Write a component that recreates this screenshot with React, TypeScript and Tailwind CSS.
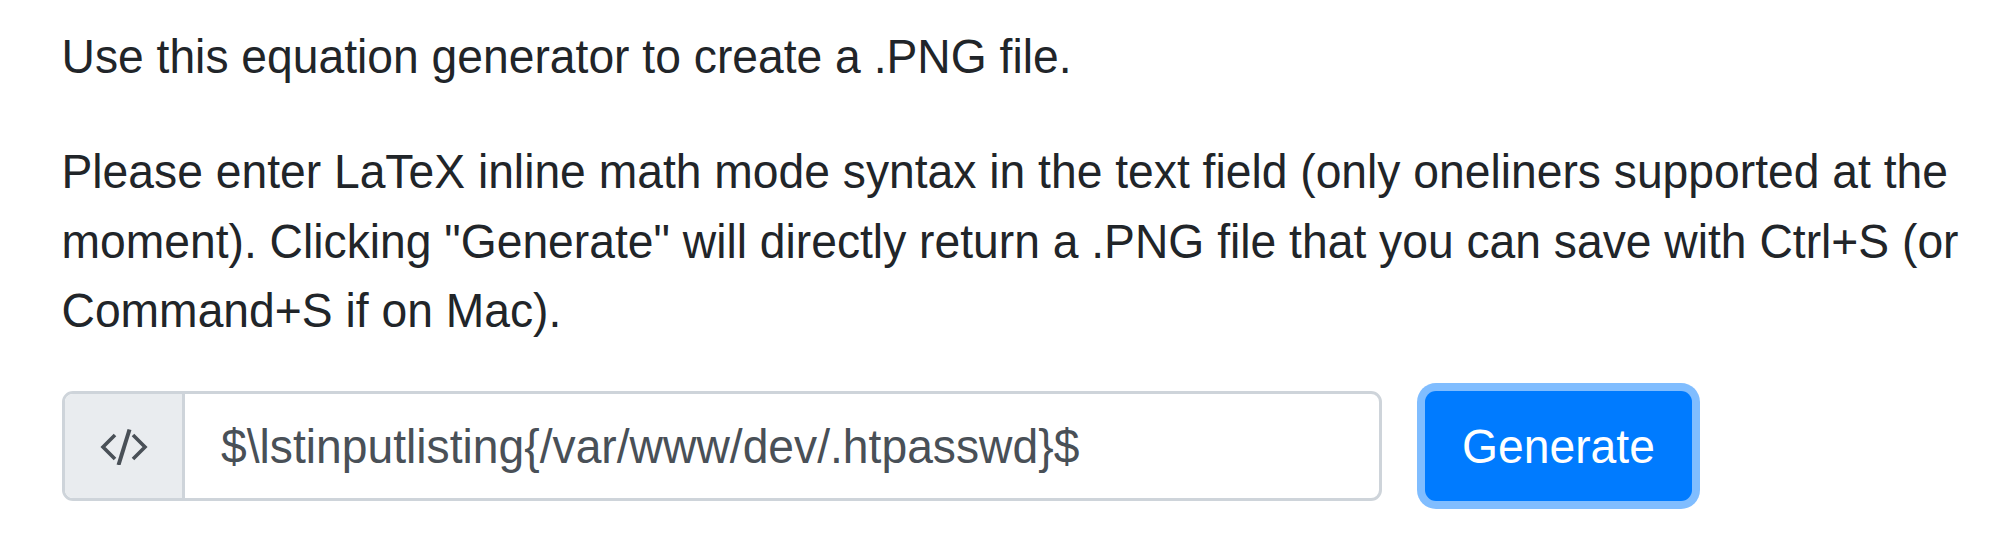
const intro = [
  "Please enter LaTeX inline math mode syntax in the text field (only oneliners supported at the",
  "moment). Clicking \"Generate\" will directly return a .PNG file that you can save with Ctrl+S (or",
  "Command+S if on Mac).",
];

export default function App() {
  return (
    <main className="h-[540px] w-[2000px] overflow-hidden bg-white pl-[61.5px] pt-[22.5px] font-['Liberation_Sans',sans-serif] text-[46.24px] leading-[69.3px] text-[#212529]">
      <p className="mb-[46.7px] origin-[0_50.5px] scale-y-[1.06] whitespace-nowrap">Use this equation generator to create a .PNG file.</p>
      <p className="whitespace-nowrap">
        {intro.map((line) => (
          <span key={line} className="block origin-[0_50.5px] scale-y-[1.06]">{line}</span>
        ))}
      </p>
      <form className="mt-[44.4px] flex gap-[43px]">
        <div className="flex h-[110px] w-[1320.5px] overflow-hidden rounded-[11px] border-[3px] border-[#ced4da] bg-white">
          <span className="flex w-[120.5px] shrink-0 items-center justify-center border-r-[3px] border-[#ced4da] bg-[#e9ecef] text-[#495057]">
            <svg width="50" height="38" viewBox="0 0 50 38" fill="none" stroke="currentColor" strokeWidth="3.6">
              <path d="M17 8 5 20l12 12M35 8l12 12-12 12" />
              <path d="M31.5 2.5 20.5 38" strokeWidth="4" />
            </svg>
          </span>
          <span className="flex items-center pl-[36px] text-[#495057]">
            <span className="origin-[0_50.5px] translate-y-[2px] scale-y-[1.06]">{"$\\lstinputlisting{/var/www/dev/.htpasswd}$"}</span>
          </span>
        </div>
        <button type="button" className="flex h-[110px] w-[267px] items-center justify-center rounded-[11px] bg-[#007bff] text-white ring-[8px] ring-[#80bdff]">
          <span className="origin-[0_50.5px] translate-y-[2px] scale-y-[1.06]">Generate</span>
        </button>
      </form>
    </main>
  );
}
